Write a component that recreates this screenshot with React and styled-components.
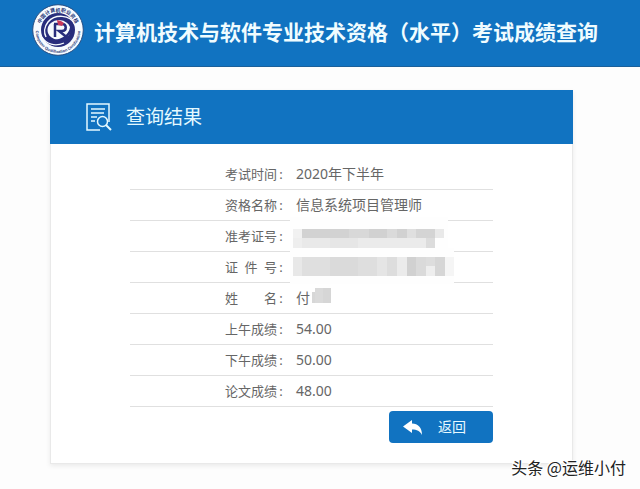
import React from "react";
import styled, { createGlobalStyle } from "styled-components";

const Global = createGlobalStyle`
  *, *::before, *::after { box-sizing: border-box; }
  body {
    margin: 0;
    background: #fdfdfd;
    color: #666;
    font-family: "Noto Sans", "Noto Sans CJK SC", sans-serif;
  }
`;

const Page = styled.div`
  position: relative;
  min-height: 100vh;
`;

const Header = styled.header`
  display: flex;
  align-items: center;
  gap: 10px;
  height: 67px;
  padding: 0 32px 6px;
  background: #1173c1;
  border-bottom: 1px solid #1b609a;
`;

const Emblem = styled.svg`
  flex: none;
  width: 52px;
  height: 52px;
`;

const SiteTitle = styled.h1`
  margin: 0;
  padding-top: 2px;
  color: #f0fcff;
  font-family: "Noto Sans CJK SC", sans-serif;
  font-size: 21px;
  font-weight: 700;
  line-height: 32px;
  white-space: nowrap;
`;

const Card = styled.main`
  margin: 23px 67px 0 50px;
  background: #fff;
  border: 1px solid #e9e9e9;
  border-top: 0;
  box-shadow: 0 2px 5px rgba(0, 0, 0, 0.08);
`;

const CardHeader = styled.div`
  display: flex;
  align-items: center;
  gap: 14px;
  height: 54px;
  margin: 0 -1px;
  padding: 0 35px;
  background: #1173c1;
  color: #e4f9ff;
`;

const CardTitle = styled.h2`
  margin: 0;
  font-size: 19px;
  font-weight: 400;
  line-height: 28px;
`;

const CardBody = styled.div`
  padding: 15px 79px 20px;
`;

const Results = styled.table`
  width: 100%;
  border-spacing: 0;
  table-layout: fixed;
`;

const Cell = styled.td`
  position: relative;
  height: 31px;
  padding: 0 0 0 11px;
  border-bottom: 1px solid #e0e0e0;
  font-size: 14px;
  line-height: 20px;
  text-align: left;
  white-space: nowrap;
`;

const Label = styled.th`
  width: 155px;
  height: 31px;
  padding: 0;
  border-bottom: 1px solid #e0e0e0;
  font-size: 13px;
  font-weight: 400;
  line-height: 20px;
`;

const LabelText = styled.span`
  display: flex;
  justify-content: flex-end;
`;

const Letters = styled.span`
  display: flex;
  justify-content: space-between;
  width: 52px;
`;

const Colon = styled.span`
  width: 8px;
  text-align: center;
`;

const Mask = styled.svg`
  position: absolute;
  top: -4px;
  left: 5px;
  width: 164px;
  height: 36px;
`;

const Actions = styled.div`
  display: flex;
  justify-content: flex-end;
  padding-top: 4px;
`;

const BackButton = styled.button`
  display: flex;
  align-items: center;
  gap: 15px;
  width: 104px;
  height: 32px;
  padding: 0 14px;
  border: 0;
  border-radius: 4px;
  background: #1173c1;
  color: #e8faff;
  font-family: inherit;
  font-size: 14px;
  line-height: 20px;
  cursor: pointer;
`;

const Signature = styled.div`
  position: absolute;
  right: 14px;
  bottom: 10px;
  color: #222;
  font-family: "Noto Sans CJK SC", sans-serif;
  font-size: 16px;
  line-height: 24px;
  text-shadow: -1px -1px 0 #fff, 1px -1px 0 #fff, -1px 1px 0 #fff, 1px 1px 0 #fff;
`;

function Logo() {
  return (
    <Emblem viewBox="0 0 52 52" role="img" aria-label="中国计算机技术职业资格网">
      <defs>
        <path id="arcTop" d="M7.5 26a18.500 18.500 0 0 1 37 0" />
        <path id="arcBottom" d="M4 23a22.3 22.3 0 1 0 44 0" />
      </defs>
      <circle cx="26" cy="26" r="25.3" fill="#f7fbff" stroke="#244d83" strokeWidth="1" />
      <circle cx="26" cy="26" r="17" fill="#282d7c" />
      <ellipse cx="27" cy="26" rx="11.500" ry="10" fill="#f7fbff" />
      <path d="M43 21C38 10 23 10 16 18c-4 5-4 11-2 15" fill="none" stroke="#f7fbff" strokeWidth="1.500" />
      <path d="M38 17c4 8-2 18-14 20" fill="none" stroke="#282d7c" strokeWidth="2.500" />
      <path d="M10 33c4 7 13 10 22 6" fill="none" stroke="#f7fbff" strokeWidth="1.200" />
      <path d="M22 20h8c5 0 5 7 0 7h-3l10 8M23 20v13" fill="none" stroke="#282d7c" strokeWidth="2.500" />
      <path d="m25 16 4 1 3 2-2 3-4-1Z" fill="#c8385b" />
      <text fontFamily="Noto Sans CJK SC, sans-serif" fontSize="5" fontWeight="700" fill="#283878" textAnchor="middle">
        <textPath href="#arcTop" startOffset="50%">中国计算机职业资格</textPath>
      </text>
      <text fontFamily="Liberation Sans, sans-serif" fontSize="4" fontWeight="700" fill="#283878" textAnchor="middle">
        <textPath href="#arcBottom" startOffset="50%">Computer Qualification Certification</textPath>
      </text>
    </Emblem>
  );
}

function SearchDocIcon() {
  return (
    <svg width="27" height="28" viewBox="0 0 27 28" fill="none" stroke="currentColor" strokeWidth="1.5" aria-hidden="true">
      <path d="M15 27H2V1h22v18M6 6h14M6 10h13M6 14h6M6 18h4" />
      <circle cx="17.5" cy="18.5" r="5" />
      <path d="m21 22 5 5" strokeWidth="2" />
    </svg>
  );
}

function ReplyIcon() {
  return (
    <svg width="20" height="15" viewBox="0 0 20 15" fill="#fff" aria-hidden="true">
      <path d="M0 6.5 9 0v3.5c6 0 10 4 10 11.5-2-4-5-5.500-10-5.500V13Z" />
    </svg>
  );
}

const ticketMask = [
  [3, 12, 9, 9, "#f1f1f1"], [12, 12, 47, 9, "#d2d2d2"], [59, 12, 20, 9, "#d8d8d8"],
  [79, 12, 18, 9, "#d1d1d1"], [97, 12, 10, 9, "#dadada"], [107, 12, 10, 9, "#d1d1d1"],
  [117, 12, 9, 9, "#dfdfdf"], [126, 12, 19, 9, "#d4d4d4"], [145, 12, 9, 9, "#e9e9e9"],
  [3, 21, 9, 10, "#eeeeee"], [12, 21, 28, 10, "#e9e9e9"], [40, 21, 28, 10, "#e6e6e6"],
  [68, 21, 68, 10, "#ebebeb"], [136, 21, 9, 10, "#dcdcdc"],
];

const idMask = [
  [3, 9, 9, 19, "#e8e8e8"], [12, 9, 28, 19, "#dfdfdf"], [40, 9, 28, 19, "#dadada"],
  [68, 9, 19, 19, "#dedede"], [87, 9, 10, 19, "#e5e5e5"], [97, 9, 10, 19, "#dddddd"],
  [107, 9, 10, 19, "#ebebeb"], [117, 9, 9, 19, "#d1d1d1"], [126, 9, 10, 19, "#dadada"],
  [136, 9, 9, 9, "#dddddd"], [136, 18, 9, 10, "#eeeeee"], [145, 9, 10, 19, "#d6d6d6"],
  [155, 9, 9, 19, "#f5f5f5"],
];

const nameMask = [
  [22, 13, 5, 11, "#d7d7d7"], [25, 9, 8, 15, "#dadada"], [33, 9, 8, 15, "#d6d6d6"],
];

function Redaction({ blocks, cover }) {
  return (
    <Mask viewBox="0 0 164 36" aria-label="已隐藏">
      {cover > 0 && <rect width={cover} height="36" fill="#fefefe" />}
      {blocks.map(([x, y, w, h, fill]) => (
        <rect key={`${x}-${y}`} x={x} y={y} width={w} height={h} fill={fill} />
      ))}
    </Mask>
  );
}

const rows = [
  { label: ["考", "试", "时", "间"], value: "2020年下半年" },
  { label: ["资", "格", "名", "称"], value: "信息系统项目管理师" },
  { label: ["准", "考", "证", "号"], blocks: ticketMask, cover: 158 },
  { label: ["证", "件", "号"], blocks: idMask, cover: 164 },
  { label: ["姓", "名"], value: "付", blocks: nameMask, cover: 0 },
  { label: ["上", "午", "成", "绩"], value: "54.00" },
  { label: ["下", "午", "成", "绩"], value: "50.00" },
  { label: ["论", "文", "成", "绩"], value: "48.00" },
];

export default function App() {
  return (
    <Page>
      <Global />
      <Header>
        <Logo />
        <SiteTitle>计算机技术与软件专业技术资格（水平）考试成绩查询</SiteTitle>
      </Header>
      <Card>
        <CardHeader>
          <SearchDocIcon />
          <CardTitle>查询结果</CardTitle>
        </CardHeader>
        <CardBody>
          <Results>
            <tbody>
              {rows.map(({ label, value, blocks, cover }) => (
                <tr key={label.join("")}>
                  <Label scope="row">
                    <LabelText>
                      <Letters>{label.map((c) => <span key={c}>{c}</span>)}</Letters>
                      <Colon>:</Colon>
                    </LabelText>
                  </Label>
                  <Cell>
                    {value}
                    {blocks && <Redaction blocks={blocks} cover={cover} />}
                  </Cell>
                </tr>
              ))}
            </tbody>
          </Results>
          <Actions>
            <BackButton type="button">
              <ReplyIcon />
              返回
            </BackButton>
          </Actions>
        </CardBody>
      </Card>
      <Signature>头条 @运维小付</Signature>
    </Page>
  );
}
